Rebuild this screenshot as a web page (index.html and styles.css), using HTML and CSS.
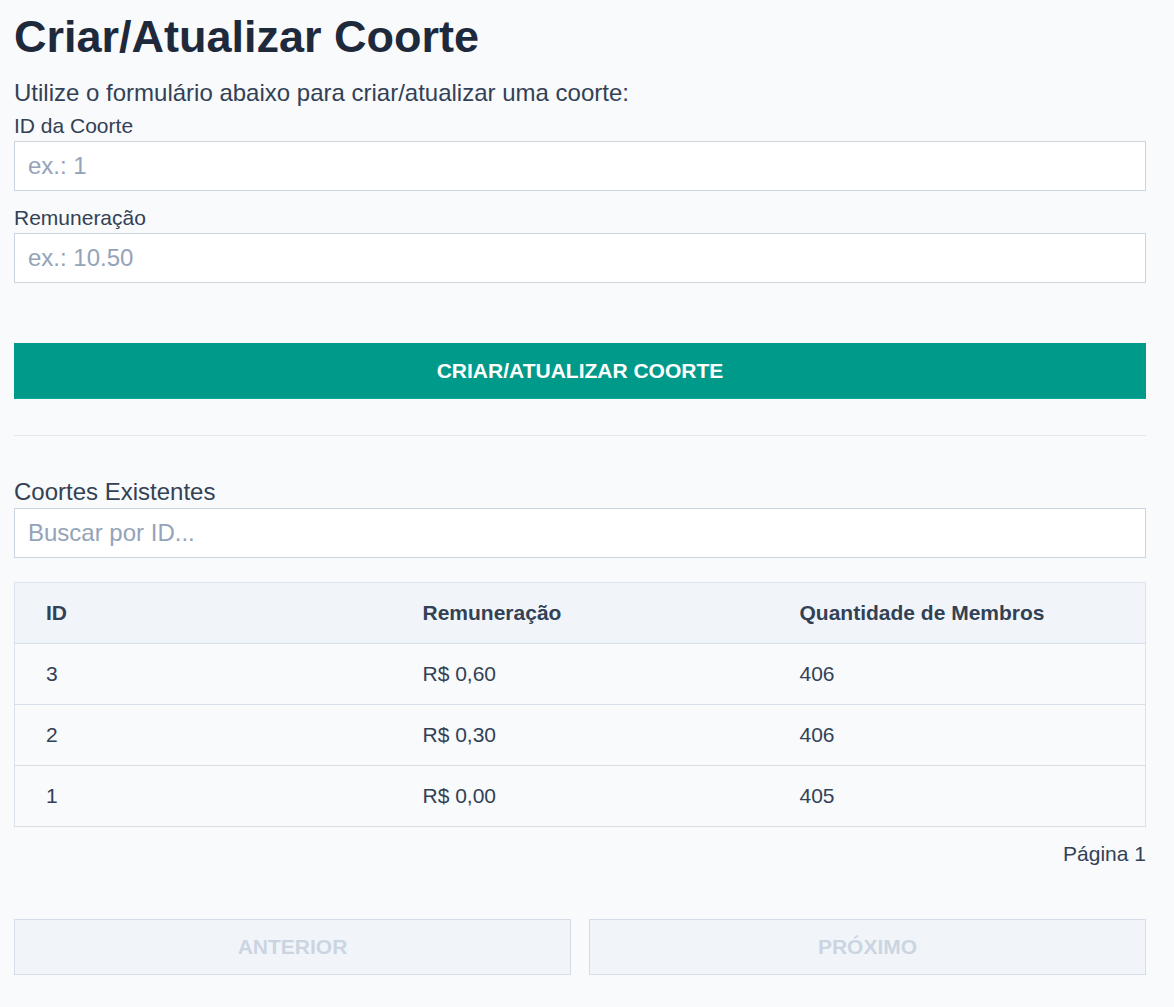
FILE: index.html
```html
<!DOCTYPE html>
<html lang="pt-BR">
<head>
<meta charset="utf-8">
<title>Criar/Atualizar Coorte</title>
<link rel="stylesheet" href="styles.css">
</head>
<body>
<main class="page">
  <h1 class="title">Criar/Atualizar Coorte</h1>
  <p class="intro">Utilize o formulário abaixo para criar/atualizar uma coorte:</p>
  <form class="form">
    <label class="label" for="id">ID da Coorte</label>
    <input class="input" id="id" type="text" placeholder="ex.: 1">
    <label class="label label-second" for="rem">Remuneração</label>
    <input class="input" id="rem" type="text" placeholder="ex.: 10.50">
    <button class="primary" type="button">CRIAR/ATUALIZAR COORTE</button>
  </form>
  <hr class="divider">
  <h2 class="section">Coortes Existentes</h2>
  <input class="input search" type="text" placeholder="Buscar por ID...">
  <table class="table">
    <thead>
      <tr><th>ID</th><th>Remuneração</th><th>Quantidade de Membros</th></tr>
    </thead>
    <tbody>
      <tr><td>3</td><td>R$ 0,60</td><td>406</td></tr>
      <tr><td>2</td><td>R$ 0,30</td><td>406</td></tr>
      <tr><td>1</td><td>R$ 0,00</td><td>405</td></tr>
    </tbody>
  </table>
  <div class="page-info">Página 1</div>
  <div class="pager">
    <button class="pager-btn" type="button" disabled>ANTERIOR</button>
    <button class="pager-btn" type="button" disabled>PRÓXIMO</button>
  </div>
</main>
</body>
</html>
```
FILE: styles.css
```css
html, body {
  margin: 0;
  padding: 0;
  background: #f8fafc;
}
body {
  font-family: "Liberation Sans", Arial, sans-serif;
  color: #334155;
}
.page {
  width: 1132px;
  padding: 11px 0 32px 14px;
}
.title {
  margin: 0;
  font-size: 45px;
  line-height: 52px;
  font-weight: 700;
  color: #1e293b;
}
.intro {
  margin: 16px 0 0;
  font-size: 24px;
  line-height: 28px;
  color: #334155;
}
.form {
  display: flex;
  flex-direction: column;
}
.label {
  display: block;
  margin-top: 7px;
  font-size: 21px;
  line-height: 24px;
  color: #334155;
}
.label-second {
  margin-top: 15px;
}
.input {
  display: block;
  box-sizing: border-box;
  width: 100%;
  height: 50px;
  margin: 3px 0 0;
  padding: 0 13px;
  border: 1px solid #cbd5e1;
  border-radius: 0;
  background: #ffffff;
  font-family: "Liberation Sans", Arial, sans-serif;
  font-size: 24px;
  color: #334155;
  outline: none;
}
.input::placeholder {
  color: #94a3b8;
}
.primary {
  margin-top: 60px;
  height: 56px;
  border: none;
  border-bottom: 1px solid #0aa899;
  background: #009a8a;
  color: #ffffff;
  font-family: "Liberation Sans", Arial, sans-serif;
  font-size: 21px;
  font-weight: 700;
  cursor: pointer;
}
.divider {
  margin: 36px 0 0;
  border: none;
  border-top: 1px solid #e2e8f0;
}
.section {
  margin: 42px 0 0;
  font-size: 24px;
  line-height: 28px;
  font-weight: 400;
  color: #334155;
}
.search {
  margin-top: 2px;
}
.table {
  width: 100%;
  margin-top: 24px;
  border-collapse: collapse;
  table-layout: fixed;
  border: 1px solid #dbe3ec;
  font-size: 21px;
}
.table th, .table td {
  text-align: left;
  padding: 0 0 0 31px;
  height: 60px;
  border-bottom: 1px solid #d7dfe9;
}
.table th {
  background: #f1f5f9;
  font-weight: 700;
  color: #334155;
}
.table td {
  color: #334155;
}
.page-info {
  margin-top: 15px;
  text-align: right;
  font-size: 21px;
  line-height: 24px;
  color: #334155;
}
.pager {
  display: grid;
  grid-template-columns: 1fr 1fr;
  gap: 18px;
  margin-top: 53px;
}
.pager-btn {
  height: 56px;
  border: 1px solid #d5dee8;
  background: #f1f5f9;
  color: #cbd5e1;
  font-family: "Liberation Sans", Arial, sans-serif;
  font-size: 21px;
  font-weight: 700;
}
```
